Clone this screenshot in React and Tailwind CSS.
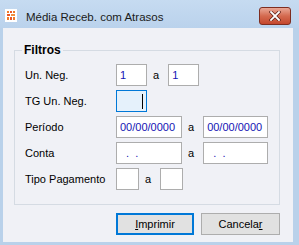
import React from "react";

const font = { fontFamily: '"Liberation Sans", Arial, sans-serif' };

function Field({ w, children, focused }) {
  return (
    <div
      className={
        "h-[22px] flex items-center pl-[3px] text-[11px] text-[#1414b4] whitespace-pre border " +
        (focused ? "border-[#0078d7] bg-[#e5f1fb]" : "border-[#adadad] bg-white")
      }
      style={{ width: w }}
    >
      {children}
    </div>
  );
}

function Row({ label, children }) {
  return (
    <div className="flex items-center h-[22px]">
      <span className="w-[91px] text-[11px] text-black">{label}</span>
      {children}
    </div>
  );
}

function A() {
  return <span className="text-[11px] text-black ml-[6px] mr-[9px]">a</span>;
}

export default function App() {
  return (
    <div
      className="w-[299px] h-[245px] bg-[#b9d1ea] flex flex-col overflow-hidden"
      style={font}
    >
      <div className="h-[28px] flex items-start bg-gradient-to-b from-[#c6dbf1] to-[#bad2ec]">
        <svg className="mt-[9px] ml-[5px]" width="12" height="13" viewBox="0 0 12 13">
          <rect x="0" y="0" width="12" height="13" fill="#fff" />
          <rect x="2" y="2" width="2" height="2" fill="#f07a2a" />
          <rect x="5" y="2" width="2" height="2" fill="#e8582a" />
          <rect x="8" y="2" width="2" height="2" fill="#f07a2a" />
          <rect x="2" y="5" width="3" height="2" fill="#e8582a" />
          <rect x="6" y="5" width="4" height="2" fill="#f29040" />
          <rect x="2" y="8" width="2" height="3" fill="#f07a2a" />
          <rect x="5" y="8" width="2" height="3" fill="#e8582a" />
          <rect x="8" y="8" width="2" height="3" fill="#f07a2a" />
        </svg>
        <span className="ml-[9px] mt-[10px] text-[11.5px] leading-[14px] text-[#1a1a1a]">
          Média Receb. com Atrasos
        </span>
        <div className="ml-auto mr-[8px] mt-[7px] w-[32px] h-[18px] rounded-[3px] border border-[#7e2d20] bg-gradient-to-b from-[#e9a796] via-[#d46a4f] to-[#c4462d] flex items-center justify-center">
          <svg width="12" height="10" viewBox="0 0 12 10">
            <path d="M2 1 L10 9 M10 1 L2 9" stroke="#5a1e14" strokeWidth="3.2" strokeLinecap="square" />
            <path d="M2 1 L10 9 M10 1 L2 9" stroke="#fff" strokeWidth="1.8" strokeLinecap="square" />
          </svg>
        </div>
      </div>

      <div className="flex-1 ml-[3px] mr-[6px] mb-[3px] bg-[#f0f1f6] pl-[11px] pt-[22px]">
        <div className="relative w-[266px] h-[155px] border border-[#d5dbe3] pt-[13px] pl-[10px] flex flex-col gap-[4px]">
          <span className="absolute -top-[8px] left-[7px] px-[2px] bg-[#f0f1f6] text-[12px] font-bold text-black leading-[14px]">
            Filtros
          </span>
          <Row label="Un. Neg.">
            <Field w={31}>1</Field>
            <A />
            <Field w={31}>1</Field>
          </Row>
          <Row label="TG Un. Neg.">
            <Field w={31} focused>
              <span className="ml-auto mr-[3px] w-[1px] h-[15px] bg-black" />
            </Field>
          </Row>
          <Row label="Período">
            <Field w={66}>00/00/0000</Field>
            <A />
            <Field w={65}>00/00/0000</Field>
          </Row>
          <Row label="Conta">
            <Field w={66}>{"  .  ."}</Field>
            <A />
            <Field w={65}>{"  .  ."}</Field>
          </Row>
          <Row label="Tipo Pagamento">
            <Field w={23}></Field>
            <A />
            <Field w={23}></Field>
          </Row>
        </div>

        <div className="w-[266px] flex justify-end gap-[7px] mt-[8px]">
          <button className="w-[78px] h-[22px] border-2 border-[#0078d7] bg-[#e1e1e1] text-[11px] text-black">
            <span className="underline">I</span>mprimir
          </button>
          <button className="w-[79px] h-[22px] border border-[#adadad] bg-[#e1e1e1] text-[11px] text-black">
            Cancela<span className="underline">r</span>
          </button>
        </div>
      </div>
    </div>
  );
}
